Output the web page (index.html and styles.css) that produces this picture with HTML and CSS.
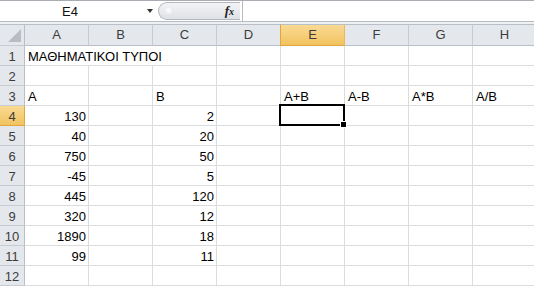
FILE: index.html
```html
<!DOCTYPE html>
<html>
<head>
<meta charset="utf-8">
<link rel="stylesheet" href="styles.css">
</head>
<body>
<div class="app">
  <div class="fbar">
    <div class="namebox"><span class="name">E4</span><span class="arrow"></span></div>
    <div class="pill"><span class="knob"></span><span class="fx"><i>f</i><i class="x">x</i></span></div>
    <div class="input"></div>
  </div>
  <div class="sep"></div>
  <div class="sheet">
    <div class="row head">
      <div class="rh corner"><span class="tri"></span></div>
      <div class="ch">A</div><div class="ch">B</div><div class="ch">C</div><div class="ch">D</div>
      <div class="ch sel">E</div><div class="ch">F</div><div class="ch">G</div><div class="ch">H</div>
    </div>
    <div class="row">
      <div class="rh">1</div>
      <div class="c span3">ΜΑΘΗΜΑΤΙΚΟΙ ΤΥΠΟΙ</div><div class="c"></div>
      <div class="c"></div><div class="c"></div><div class="c"></div><div class="c"></div>
    </div>
    <div class="row">
      <div class="rh">2</div>
      <div class="c"></div><div class="c"></div><div class="c"></div><div class="c"></div>
      <div class="c"></div><div class="c"></div><div class="c"></div><div class="c"></div>
    </div>
    <div class="row">
      <div class="rh">3</div>
      <div class="c">A</div><div class="c"></div><div class="c">B</div><div class="c"></div>
      <div class="c">A+B</div><div class="c">A-B</div><div class="c">A*B</div><div class="c">A/B</div>
    </div>
    <div class="row">
      <div class="rh sel">4</div>
      <div class="c n">130</div><div class="c"></div><div class="c n">2</div><div class="c"></div>
      <div class="c active"><span class="cursor"><span class="handle"></span></span></div><div class="c"></div><div class="c"></div><div class="c"></div>
    </div>
    <div class="row">
      <div class="rh">5</div>
      <div class="c n">40</div><div class="c"></div><div class="c n">20</div><div class="c"></div>
      <div class="c"></div><div class="c"></div><div class="c"></div><div class="c"></div>
    </div>
    <div class="row">
      <div class="rh">6</div>
      <div class="c n">750</div><div class="c"></div><div class="c n">50</div><div class="c"></div>
      <div class="c"></div><div class="c"></div><div class="c"></div><div class="c"></div>
    </div>
    <div class="row">
      <div class="rh">7</div>
      <div class="c n">-45</div><div class="c"></div><div class="c n">5</div><div class="c"></div>
      <div class="c"></div><div class="c"></div><div class="c"></div><div class="c"></div>
    </div>
    <div class="row">
      <div class="rh">8</div>
      <div class="c n">445</div><div class="c"></div><div class="c n">120</div><div class="c"></div>
      <div class="c"></div><div class="c"></div><div class="c"></div><div class="c"></div>
    </div>
    <div class="row">
      <div class="rh">9</div>
      <div class="c n">320</div><div class="c"></div><div class="c n">12</div><div class="c"></div>
      <div class="c"></div><div class="c"></div><div class="c"></div><div class="c"></div>
    </div>
    <div class="row">
      <div class="rh">10</div>
      <div class="c n">1890</div><div class="c"></div><div class="c n">18</div><div class="c"></div>
      <div class="c"></div><div class="c"></div><div class="c"></div><div class="c"></div>
    </div>
    <div class="row">
      <div class="rh">11</div>
      <div class="c n">99</div><div class="c"></div><div class="c n">11</div><div class="c"></div>
      <div class="c"></div><div class="c"></div><div class="c"></div><div class="c"></div>
    </div>
    <div class="row">
      <div class="rh">12</div>
      <div class="c"></div><div class="c"></div><div class="c"></div><div class="c"></div>
      <div class="c"></div><div class="c"></div><div class="c"></div><div class="c"></div>
    </div>
  </div>
</div>
</body>
</html>
```

FILE: styles.css
```css
html, body {
  margin: 0;
  padding: 0;
  background: #ffffff;
}
.app {
  width: 534px;
  height: 288px;
  overflow: hidden;
  font-family: "Liberation Sans", Arial, sans-serif;
  font-size: 13px;
  color: #000;
}
.fbar {
  height: 20px;
  border-top: 1px solid #a9adb3;
  border-bottom: 1px solid #b7bcc3;
  display: flex;
  background: #fff;
}
.namebox {
  width: 158px;
  display: flex;
  align-items: center;
}
.name {
  width: 140px;
  text-align: center;
  font-size: 13px;
  line-height: 20px;
  padding-top: 1px;
  color: #111;
}
.arrow {
  margin-left: 7px;
  width: 0;
  height: 0;
  border-left: 3.5px solid transparent;
  border-right: 3.5px solid transparent;
  border-top: 4px solid #333;
}
.pill {
  width: 82px;
  height: 18px;
  margin-top: 1px;
  box-sizing: border-box;
  border: 1px solid #b3b8bf;
  border-right: none;
  border-radius: 10px 0 0 10px;
  background: linear-gradient(#f2f3f5, #dfe2e6);
  display: flex;
  align-items: center;
  justify-content: space-between;
  padding: 0 6px 0 5px;
}
.knob {
  width: 10px;
  height: 10px;
  border-radius: 50%;
  background: radial-gradient(circle at 45% 40%, #ffffff 0%, #eceef0 45%, #d3d6db 100%);
}
.fx {
  font-family: "Liberation Serif", "Times New Roman", serif;
  font-weight: bold;
  font-size: 13px;
  color: #222;
  line-height: 16px;
}
.fx .x {
  font-size: 10px;
}
.input {
  flex: 1;
  border-left: 1px solid #b7bcc3;
  margin-left: 2px;
  background: #fff;
}
.sep {
  height: 2px;
  background: #eef0f3;
}
.sheet {
  display: flex;
  flex-direction: column;
}
.row {
  display: flex;
  height: 20px;
}
.row.head {
  height: 22px;
}
.rh {
  flex: 0 0 25px;
  box-sizing: border-box;
  background: #e4e8ed;
  border-right: 1px solid #b9bfc7;
  border-bottom: 1px solid #c7ccd3;
  text-align: center;
  color: #3c3c3c;
  padding-top: 3px;
  line-height: 16px;
}
.rh.sel {
  background: linear-gradient(#f9da94, #f2c35f);
  border-bottom-color: #e3a63e;
  border-right-color: #e3a63e;
}
.corner {
  position: relative;
  border-top: 1px solid #b9bfc7;
  padding: 0;
}
.tri {
  position: absolute;
  right: 3px;
  bottom: 3px;
  width: 0;
  height: 0;
  border-left: 13px solid transparent;
  border-bottom: 13px solid #b9bdc3;
}
.ch {
  flex: 0 0 64px;
  box-sizing: border-box;
  background: #e4e8ed;
  border-top: 1px solid #b9bfc7;
  border-right: 1px solid #c7ccd3;
  border-bottom: 1px solid #b9bfc7;
  text-align: center;
  color: #3c3c3c;
  line-height: 20px;
}
.ch.sel {
  background: linear-gradient(#f9da94, #f2c35f);
  border-bottom-color: #e3a63e;
  border-right-color: #e9b95a;
  border-left: 1px solid #e3a63e;
  margin-left: -1px;
  flex-basis: 65px;
}
.c {
  flex: 0 0 64px;
  box-sizing: border-box;
  border-right: 1px solid #dadcdd;
  border-bottom: 1px solid #dadcdd;
  padding: 3px 3px 0 3px;
  line-height: 16px;
  white-space: nowrap;
}
.c.span3 {
  flex-basis: 192px;
}
.c.n {
  text-align: right;
  padding-right: 2px;
}
.c.active {
  position: relative;
}
.cursor {
  position: absolute;
  left: -2px;
  top: -2px;
  width: 66px;
  height: 22px;
  box-sizing: border-box;
  border: 2px solid #000;
}
.handle {
  position: absolute;
  right: -4px;
  bottom: -4px;
  width: 5px;
  height: 5px;
  background: #000;
  border: 1px solid #fff;
}
```
